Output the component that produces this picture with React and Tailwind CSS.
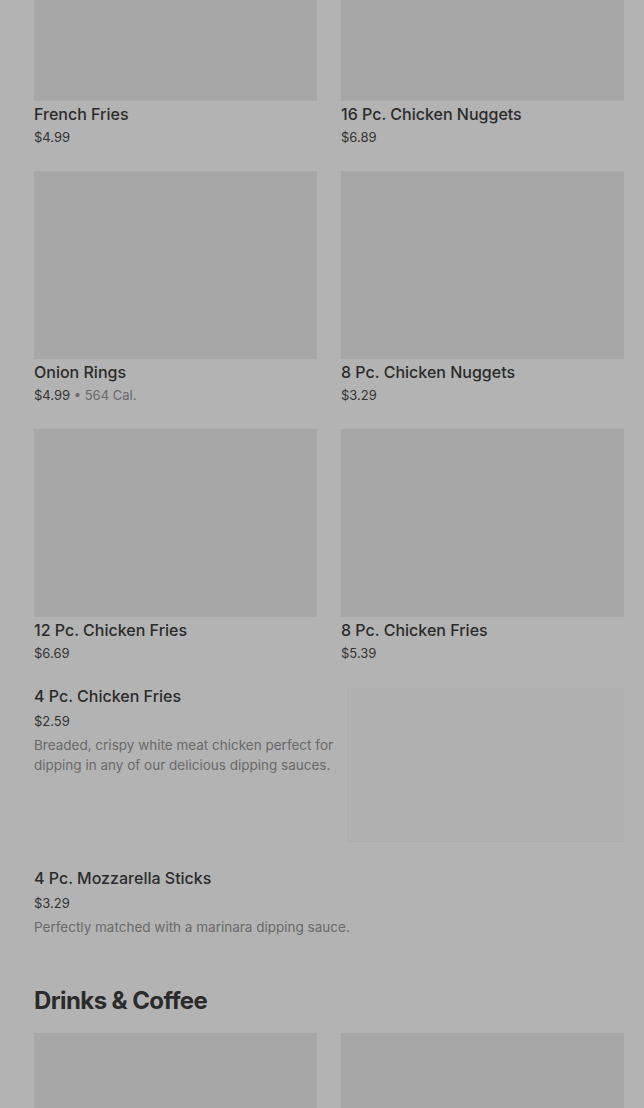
import React from "react";

const grid1 = [
  { name: "French Fries", price: "$4.99" },
  { name: "16 Pc. Chicken Nuggets", price: "$6.89" },
  { name: "Onion Rings", price: "$4.99", cal: "564 Cal." },
  { name: "8 Pc. Chicken Nuggets", price: "$3.29" },
  { name: "12 Pc. Chicken Fries", price: "$6.69" },
  { name: "8 Pc. Chicken Fries", price: "$5.39" },
];

function Card({ item }) {
  return (
    <div className="flex flex-col">
      <div className="h-[188px] bg-[#a7a7a7]" />
      <div className="mt-[1px] text-[16px] leading-[24px] font-medium text-[#2b2b2b]">{item.name}</div>
      <div className="pt-[1px] text-[13px] leading-[20px] text-[#333333]">
        {item.price}
        {item.cal && <span className="text-[#6a6a6a]"> • {item.cal}</span>}
      </div>
    </div>
  );
}

export default function App() {
  return (
    <div
      className="min-h-[1108px] bg-[#b3b3b3] pl-[34px] pr-[20px] overflow-hidden"
      style={{ fontFamily: "Inter, 'Noto Sans', sans-serif" }}
    >
      <div className="mt-[-87px] grid grid-cols-2 gap-x-6 gap-y-6">
        {grid1.map((it) => (
          <Card key={it.name} item={it} />
        ))}
      </div>

      <div className="mt-[21px] flex">
        <div className="w-[305px] flex flex-col">
          <div className="text-[16px] leading-[24px] font-medium text-[#2b2b2b]">4 Pc. Chicken Fries</div>
          <div className="mt-[3px] text-[13px] leading-[20px] text-[#333333]">$2.59</div>
          <div className="mt-[4px] text-[13.5px] leading-[20px] text-[#6a6a6a]">
            Breaded, crispy white meat chicken perfect for dipping in any of our delicious dipping sauces.
          </div>
        </div>
        <div className="ml-auto mt-[4px] w-[277px] h-[154px] bg-[#b0b0b0] border-l border-b border-[#adadad]" />
      </div>

      <div className="mt-[24px] flex flex-col">
        <div className="text-[16px] leading-[24px] font-medium text-[#2b2b2b]">4 Pc. Mozzarella Sticks</div>
        <div className="mt-[3px] text-[13px] leading-[20px] text-[#333333]">$3.29</div>
        <div className="mt-[4px] text-[13.5px] leading-[20px] text-[#6a6a6a]">
          Perfectly matched with a marinara dipping sauce.
        </div>
      </div>

      <div className="mt-[48px] text-[24px] leading-[32px] font-bold tracking-[-0.025em] text-[#2b2b2b]">
        Drinks &amp; Coffee
      </div>

      <div className="mt-[16px] grid grid-cols-2 gap-x-6">
        <div className="h-[188px] bg-[#a7a7a7]" />
        <div className="h-[188px] bg-[#a7a7a7]" />
      </div>
    </div>
  );
}
